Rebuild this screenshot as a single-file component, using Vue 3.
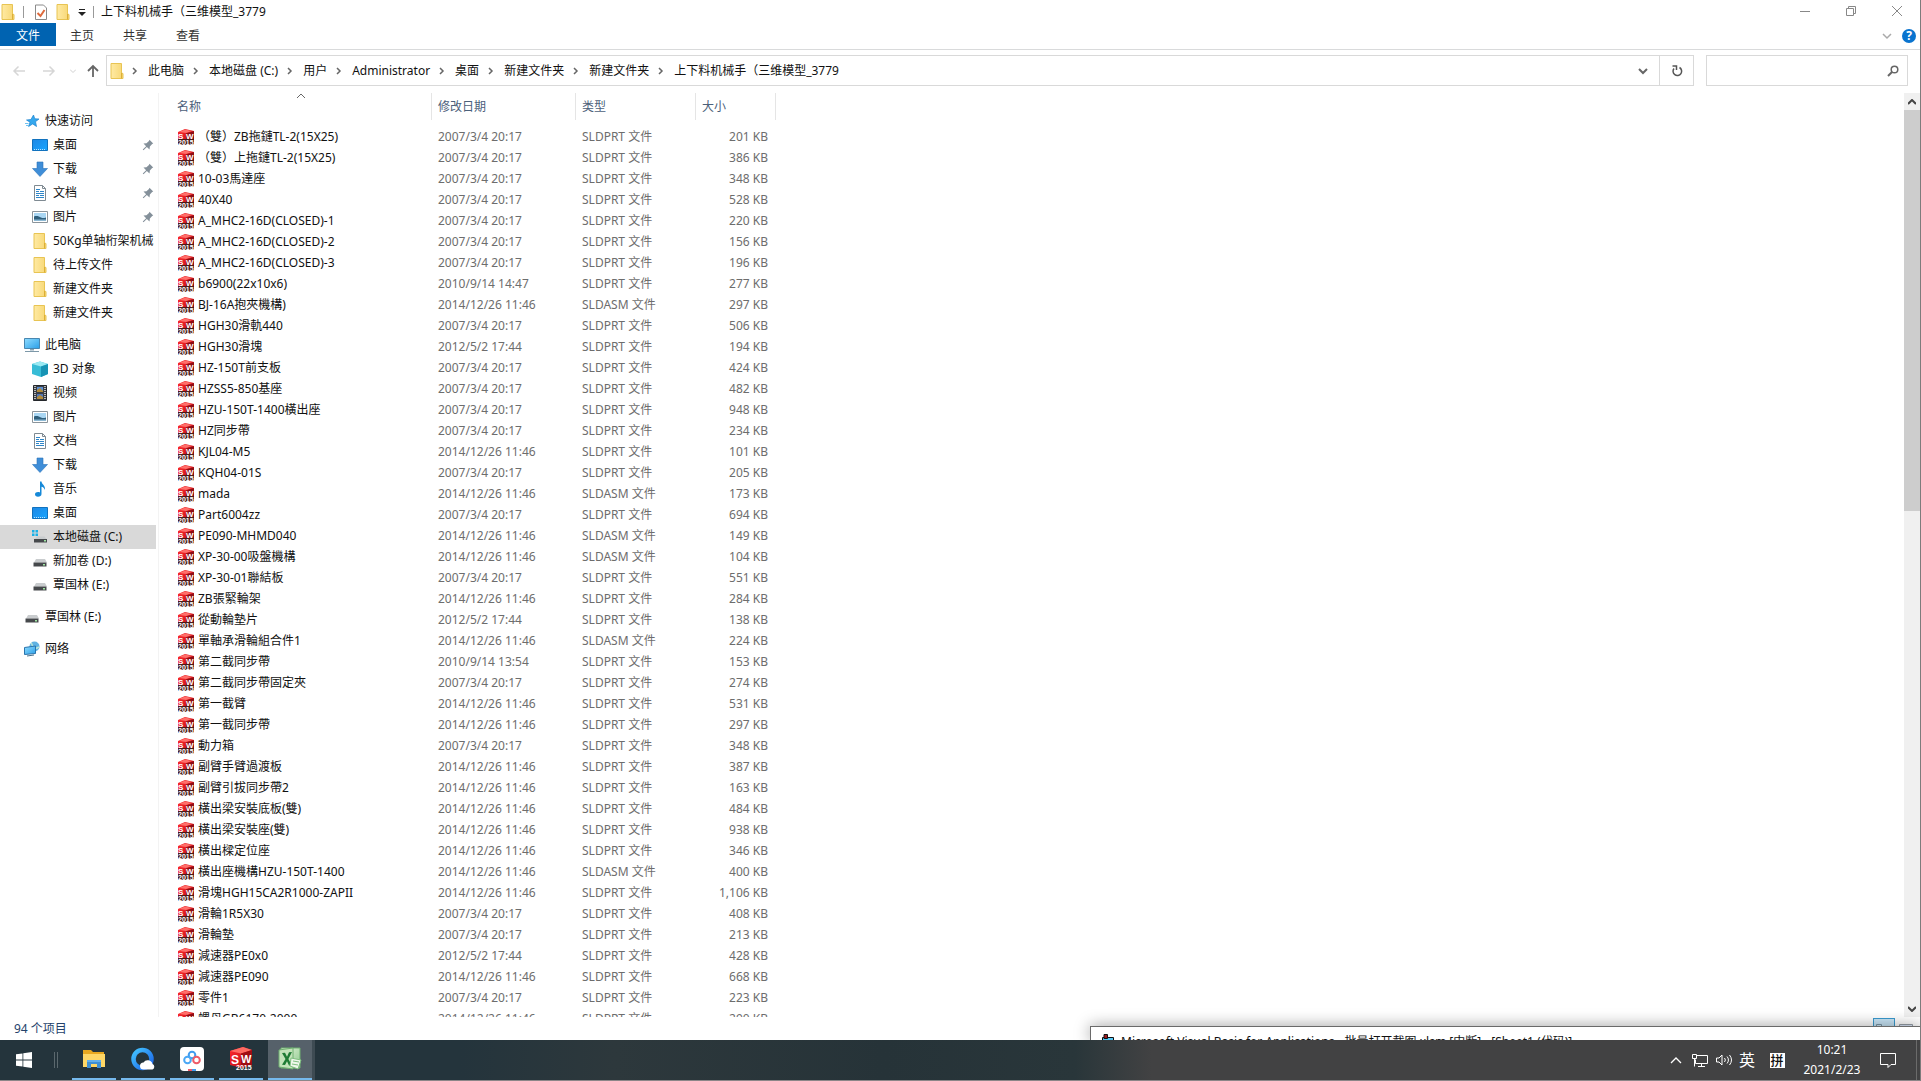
<script setup>
import { ref } from 'vue'

const tabs = ['主页', '共享', '查看']
const crumbs = ['此电脑', '本地磁盘 (C:)', '用户', 'Administrator', '桌面', '新建文件夹', '新建文件夹', '上下料机械手（三维模型_3779']

const groups = [
  {
    root: { icon: 'star', label: '快速访问' },
    items: [
      { icon: 'desktop', label: '桌面', pinned: true },
      { icon: 'download', label: '下载', pinned: true },
      { icon: 'document', label: '文档', pinned: true },
      { icon: 'picture', label: '图片', pinned: true },
      { icon: 'folder', label: '50Kg单轴桁架机械' },
      { icon: 'folder', label: '待上传文件' },
      { icon: 'folder', label: '新建文件夹' },
      { icon: 'folder', label: '新建文件夹' },
    ],
  },
  {
    root: { icon: 'computer', label: '此电脑' },
    items: [
      { icon: 'cube', label: '3D 对象' },
      { icon: 'video', label: '视频' },
      { icon: 'picture', label: '图片' },
      { icon: 'document', label: '文档' },
      { icon: 'download', label: '下载' },
      { icon: 'music', label: '音乐' },
      { icon: 'desktop', label: '桌面' },
      { icon: 'sysdrive', label: '本地磁盘 (C:)', selected: true },
      { icon: 'drive', label: '新加卷 (D:)' },
      { icon: 'drive', label: '覃国林 (E:)' },
    ],
  },
  { root: { icon: 'drive', label: '覃国林 (E:)' }, items: [] },
  { root: { icon: 'network', label: '网络' }, items: [] },
]

const D07 = '2007/3/4 20:17'
const D12 = '2012/5/2 17:44'
const D14 = '2014/12/26 11:46'
const PRT = 'SLDPRT 文件'
const ASM = 'SLDASM 文件'

const files = [
  ['（雙）ZB拖鏈TL-2(15X25)', D07, PRT, '201'],
  ['（雙）上拖鏈TL-2(15X25)', D07, PRT, '386'],
  ['10-03馬達座', D07, PRT, '348'],
  ['40X40', D07, PRT, '528'],
  ['A_MHC2-16D(CLOSED)-1', D07, PRT, '220'],
  ['A_MHC2-16D(CLOSED)-2', D07, PRT, '156'],
  ['A_MHC2-16D(CLOSED)-3', D07, PRT, '196'],
  ['b6900(22x10x6)', '2010/9/14 14:47', PRT, '277'],
  ['BJ-16A抱夾機構)', D14, ASM, '297'],
  ['HGH30滑軌440', D07, PRT, '506'],
  ['HGH30滑塊', D12, PRT, '194'],
  ['HZ-150T前支板', D07, PRT, '424'],
  ['HZSS5-850基座', D07, PRT, '482'],
  ['HZU-150T-1400橫出座', D07, PRT, '948'],
  ['HZ同步帶', D07, PRT, '234'],
  ['KJL04-M5', D14, PRT, '101'],
  ['KQH04-01S', D07, PRT, '205'],
  ['mada', D14, ASM, '173'],
  ['Part6004zz', D07, PRT, '694'],
  ['PE090-MHMD040', D14, ASM, '149'],
  ['XP-30-00吸盤機構', D14, ASM, '104'],
  ['XP-30-01聯結板', D07, PRT, '551'],
  ['ZB張緊輪架', D14, PRT, '284'],
  ['從動輪墊片', D12, PRT, '138'],
  ['單軸承滑輪組合件1', D14, ASM, '224'],
  ['第二截同步帶', '2010/9/14 13:54', PRT, '153'],
  ['第二截同步帶固定夾', D07, PRT, '274'],
  ['第一截臂', D14, PRT, '531'],
  ['第一截同步帶', D14, PRT, '297'],
  ['動力箱', D07, PRT, '348'],
  ['副臂手臂過渡板', D14, PRT, '387'],
  ['副臂引拔同步帶2', D14, PRT, '163'],
  ['橫出梁安裝底板(雙)', D14, PRT, '484'],
  ['橫出梁安裝座(雙)', D14, PRT, '938'],
  ['橫出樑定位座', D14, PRT, '346'],
  ['橫出座機構HZU-150T-1400', D14, ASM, '400'],
  ['滑塊HGH15CA2R1000-ZAPII', D14, PRT, '1,106'],
  ['滑輪1R5X30', D07, PRT, '408'],
  ['滑輪墊', D07, PRT, '213'],
  ['減速器PE0x0', D12, PRT, '428'],
  ['減速器PE090', D14, PRT, '668'],
  ['零件1', D07, PRT, '223'],
  ['螺母GB6170-2000', D14, PRT, '290'],
]

const apps = [
  { icon: 'app-explorer', label: '文件资源管理器' },
  { icon: 'app-browser', label: 'QQ浏览器' },
  { icon: 'app-netdisk', label: '百度网盘' },
  { icon: 'app-solidworks', label: 'SolidWorks' },
  { icon: 'app-excel', label: 'Excel', active: true },
]

const query = ref('')
</script>

<template>
  <div class="screen">
    <svg class="sprite" aria-hidden="true">
      <defs>
        <linearGradient id="g-folder" x1="0" x2="1"><stop offset="0" stop-color="#ffeaa3" /><stop offset="1" stop-color="#f7d774" /></linearGradient>
        <linearGradient id="g-blue" x1="0" y1="0" x2="1" y2="1"><stop offset="0" stop-color="#1e88e5" /><stop offset="1" stop-color="#19a5ff" /></linearGradient>
        <linearGradient id="g-screen" x1="0" y1="0" x2="1" y2="1"><stop offset="0" stop-color="#8fdcff" /><stop offset="1" stop-color="#2a9fe8" /></linearGradient>
        <linearGradient id="g-red" x1="0" y1="0" x2="1" y2="1"><stop offset="0" stop-color="#ff2a2e" /><stop offset="1" stop-color="#b30a12" /></linearGradient>
        <linearGradient id="g-ring" x1="0" y1="0" x2="1" y2="1"><stop offset="0" stop-color="#43c3ff" /><stop offset="1" stop-color="#1a62e8" /></linearGradient>
        <linearGradient id="g-excel" x1="0" y1="0" x2="1" y2="1"><stop offset="0" stop-color="#e5f4dc" /><stop offset="1" stop-color="#8cc98b" /></linearGradient>
        <symbol id="folder" viewBox="0 0 16 16">
          <path d="M2 .5h10.500v9.500l1.500.5v5H2z" fill="url(#g-folder)" stroke="#e8c453" />
          <path d="M12.500 10v5.500" stroke="#dcae37" />
        </symbol>
        <symbol id="star" viewBox="0 0 16 16">
          <path d="M9.500 2l1.300 3.800 4.200.2-3.500 2.700 1 4.800-3.800-2.600L4.600 13.500l1.400-4.300L2.500 7l4.400-.5z" fill="#35a8ee" stroke="#1c83cf" stroke-width=".7" />
          <path d="M1 10.500h3.500M2 12.500h3" stroke="#6fc2f2" />
        </symbol>
        <symbol id="desktop" viewBox="0 0 16 16">
          <path d="M.5 2.500h15v11H.5z" fill="url(#g-blue)" stroke="#1272be" />
          <path d="M2 12.500h12" stroke="#bfe5ff" stroke-dasharray="1 1" />
        </symbol>
        <symbol id="download" viewBox="0 0 16 16">
          <path d="M5 1h6v6.500h4.500L8 15.500.5 7.500H5z" fill="#3f8ed8" stroke="#2a73bb" stroke-width=".6" />
        </symbol>
        <symbol id="document" viewBox="0 0 16 16">
          <path d="M2.500.5h8l3 3v12h-11z" fill="#fff" stroke="#7f8a92" />
          <path d="M10.500.5v3h3" fill="none" stroke="#7f8a92" />
          <path d="M4 4.500h4M4 6.500h3m1 0h4M4 8.500h8M4 10.500h3m1 0h4M4 12.500h8" stroke="#2f86c8" />
        </symbol>
        <symbol id="picture" viewBox="0 0 16 16">
          <path d="M.5 2.500h15v11H.5z" fill="#fff" stroke="#8b949b" />
          <path d="M2 4h12v8H2z" fill="#a9d6f3" />
          <path d="M2 7.500c3-1 5 0 7 1s3 .5 5 0V12H2z" fill="#2f5f7c" />
          <path d="M2 10.500h12V12H2z" fill="#8db9d4" />
        </symbol>
        <symbol id="computer" viewBox="0 0 16 16">
          <path d="M.5 1.500h15v10H.5z" fill="url(#g-screen)" stroke="#4987b0" />
          <path d="M6 12h4v1.500H6z" fill="#8aa5b5" /><path d="M1 14.500h14" stroke="#7d98a8" />
        </symbol>
        <symbol id="cube" viewBox="0 0 16 16">
          <path d="M0 3l8-2.500L16 3v10l-7 3-9-3z" fill="#37bcd6" />
          <path d="M0 3l8-2.500L16 3 9 5.500z" fill="#9ae9f2" /><path d="M9 5.500L16 3v10l-7 3z" fill="#1793b4" />
        </symbol>
        <symbol id="video" viewBox="0 0 16 16">
          <path d="M1.500.5h13v15h-13z" fill="#3b3f46" stroke="#24272b" />
          <path d="M3 1v14M13 1v14" stroke="#e4e4e4" stroke-width="1.500" stroke-dasharray="1 1" />
          <path d="M5 2h6v5H5z" fill="#5c8fd2" /><path d="M5 9h6v5H5z" fill="#5277b8" />
          <path d="M5 5l3-2 3 3v1H5zM5 12l3-2 3 2v2H5z" fill="#b18a3a" />
        </symbol>
        <symbol id="music" viewBox="0 0 16 16">
          <path d="M8 .5h1.500c.3 3 4 3.500 3.500 8.500-.7-2-2-3-3.500-3.300V13c0 1.700-1.500 2.700-3.500 2.700S3 14.700 3 13.300 4.500 11 6 11c.8 0 1.500.1 2 .4z" fill="#1689d8" />
        </symbol>
        <symbol id="drive" viewBox="0 0 16 16">
          <path d="M4 6h9l2 3.500H2z" fill="#c9ccce" /><path d="M1.500 9.500h13v4h-13z" fill="#46494c" />
          <path d="M11 11h2v1.500h-2z" fill="#9fe6a2" />
        </symbol>
        <symbol id="sysdrive" viewBox="0 0 16 16">
          <path d="M0 1h2.500v2.500H0zM3.500 1H6v2.500H3.500zM0 4.500h2.500V7H0zM3.500 4.500H6V7H3.500z" fill="#19b0e8" />
          <path d="M5 7.500h7.500L14.500 10H3z" fill="#c9ccce" /><path d="M2 10h13v3.500H2z" fill="#46494c" />
          <path d="M12 11h2v1.500h-2z" fill="#9fe6a2" />
        </symbol>
        <symbol id="network" viewBox="0 0 16 16">
          <circle cx="10.500" cy="5.500" r="5" fill="#5fb2e2" /><path d="M7 2c2 2 1 4 3 5s3 0 5-1" fill="none" stroke="#b8e4d6" stroke-width="1.500" />
          <path d="M.5 6.500l11-1.500v7.500l-11 1z" fill="url(#g-screen)" stroke="#2a74ac" /><path d="M3 15l7-1" stroke="#48718c" />
        </symbol>
        <symbol id="pin" viewBox="0 0 16 16">
          <path d="M10 1l5 5-1.500.7L10.500 10l-.5 4-3.500-3.500L2 15l-1-1 4.500-4.500L2 6l4-.5L9.300 2.500z" fill="#84909a" />
        </symbol>
        <symbol id="sw" viewBox="0 0 16 16">
          <path d="M0 3l7-3 9 2v12l-6 2H0z" fill="url(#g-red)" />
          <path d="M1 3l6-2.500L14 2 8 4z" fill="#ff6f6a" /><path d="M8 4.500l8-2.300v9L8 13z" fill="#8d0d13" />
          <path d="M0 10h16v5l-2 1H0z" fill="#4a1a1a" />
          <text x="0" y="10" font-family="Liberation Sans, sans-serif" font-weight="700" font-size="8" fill="#fff">S</text>
          <text x="8" y="10" font-family="Liberation Sans, sans-serif" font-weight="700" font-size="8" fill="#fff">W</text>
          <text x="0" y="16" font-family="Liberation Sans, sans-serif" font-weight="700" font-size="7" fill="#fff">2015</text>
        </symbol>
        <symbol id="app-explorer" viewBox="0 0 24 24">
          <path d="M1 3h8l2 2h11v15H1z" fill="#e9a820" /><path d="M1 7h22v13H1z" fill="#ffd766" />
          <path d="M5 21v-8h14v8h-4v-4H9v4z" fill="#3f8fd3" /><path d="M5 13h14v2H5z" fill="#62b0ec" />
        </symbol>
        <symbol id="app-browser" viewBox="0 0 24 24">
          <circle cx="11.500" cy="12" r="9" fill="none" stroke="url(#g-ring)" stroke-width="4.500" />
          <path d="M12.500 22.500a3.500 3.500 0 0 1 0-7 5 5 0 0 1 9 1.500 3 3 0 0 1 0 5.500z" fill="#fff" />
        </symbol>
        <symbol id="app-netdisk" viewBox="0 0 24 24">
          <rect width="24" height="24" rx="4" fill="#fff" />
          <circle cx="12" cy="8" r="3.300" fill="none" stroke="#3f9cf0" stroke-width="2" />
          <circle cx="7.500" cy="13" r="3.300" fill="none" stroke="#4aa7f5" stroke-width="2" />
          <circle cx="16.500" cy="13" r="3.300" fill="none" stroke="#ee5a68" stroke-width="2" />
          <path d="M8 23h4" stroke="#ee5a68" stroke-width="2" /><path d="M12 23h4" stroke="#3f9cf0" stroke-width="2" />
        </symbol>
        <symbol id="app-solidworks" viewBox="0 0 24 24">
          <path d="M1 4l13-4 9 3v15l-10 3L1 18z" fill="url(#g-red)" /><path d="M1 4l13-4 9 3-11 3.500z" fill="#ff6a62" />
          <path d="M12 6.500L23 3v15l-11 3z" fill="#9e0c13" />
          <text x="2" y="17" font-family="Liberation Sans, sans-serif" font-weight="700" font-size="12" fill="#fff">S</text>
          <text x="12" y="16" font-family="Liberation Sans, sans-serif" font-weight="700" font-size="11" fill="#fff">W</text>
          <text x="7" y="23" font-family="Liberation Sans, sans-serif" font-weight="700" font-size="7" fill="#fff">2015</text>
        </symbol>
        <symbol id="app-excel" viewBox="0 0 24 24">
          <path d="M3 1h19v20H3z" fill="url(#g-excel)" stroke="#6fb070" /><path d="M1 3l14-2v21L1 20z" fill="#c3e3ba" stroke="#6fb070" />
          <path d="M4 6l3-.3 2 4 2-4.500 3-.3-3.600 7 3.600 6.800-3-.3-2-4.200-2 3.800-3-.3 3.500-5.700z" fill="#1f7b35" />
          <path d="M13 11l10 2-3 9-8-3z" fill="#eef7ea" stroke="#7fbf80" /><path d="M15 14l6 1M14 17l6 1" stroke="#7fbf80" />
        </symbol>
      </defs>
    </svg>

    <main class="window">
      <header class="titlebar">
        <svg class="ic"><use href="#folder" /></svg>
        <i class="sep"></i>
        <button class="bare" aria-label="属性">
          <svg class="ic" viewBox="0 0 16 16"><path d="M2.500 1h8l3 3v11.500h-11z" fill="#fff" stroke="#8a8a8a" /><path d="M4.500 9l3 3 4-6" fill="none" stroke="#de6a3c" stroke-width="2" /></svg>
        </button>
        <button class="bare" aria-label="新建文件夹"><svg class="ic"><use href="#folder" /></svg></button>
        <button class="bare arrow" aria-label="自定义快速访问工具栏">
          <svg width="8" height="8" viewBox="0 0 8 8"><path d="M1 1.500h6" stroke="#222" /><path d="M0 4h8L4 8z" fill="#222" /></svg>
        </button>
        <i class="sep"></i>
        <h1>上下料机械手（三维模型_3779</h1>
        <div class="wbtns">
          <button class="bare" aria-label="最小化"><svg width="12" height="12" viewBox="0 0 12 12"><path d="M1 6.500h10" stroke="#888" /></svg></button>
          <button class="bare" aria-label="还原"><svg width="12" height="12" viewBox="0 0 12 12"><path d="M1.500 3.500h7v7h-7zM3.500 3.500v-2h7v7h-2" fill="none" stroke="#888" /></svg></button>
          <button class="bare" aria-label="关闭"><svg width="12" height="12" viewBox="0 0 12 12"><path d="M1 1l10 10M11 1L1 11" stroke="#888" /></svg></button>
        </div>
      </header>

      <nav class="ribbon">
        <button class="tab file">文件</button>
        <button v-for="t in tabs" :key="t" class="tab">{{ t }}</button>
        <div class="help">
          <button class="bare" aria-label="展开功能区"><svg width="10" height="8" viewBox="0 0 10 8"><path d="M1 2l4 4 4-4" fill="none" stroke="#aaa" stroke-width="1.500" /></svg></button>
          <button class="bare q" aria-label="帮助">?</button>
        </div>
      </nav>

      <div class="address">
        <div class="history">
          <button class="bare" aria-label="后退"><svg width="14" height="12" viewBox="0 0 14 12"><path d="M13 6H2M6.500 1.500L2 6l4.500 4.500" fill="none" stroke="#d6d6d6" stroke-width="1.500" /></svg></button>
          <button class="bare" aria-label="前进"><svg width="14" height="12" viewBox="0 0 14 12"><path d="M1 6h11M7.500 1.500L12 6l-4.500 4.500" fill="none" stroke="#d6d6d6" stroke-width="1.500" /></svg></button>
          <button class="bare small" aria-label="最近位置"><svg width="6" height="6" viewBox="0 0 6 6"><path d="M0 1.500l3 3 3-3" fill="none" stroke="#d0d0d0" /></svg></button>
          <button class="bare" aria-label="向上"><svg width="12" height="14" viewBox="0 0 12 14"><path d="M6 13V2M1 7l5-5 5 5" fill="none" stroke="#666" stroke-width="1.800" /></svg></button>
        </div>
        <div class="path">
          <svg class="ic"><use href="#folder" /></svg>
          <template v-for="(c, i) in crumbs" :key="i">
            <svg class="chev" viewBox="0 0 25 10"><path d="M10 2l3 3-3 3" fill="none" stroke="#666" stroke-width="1.500" /></svg>
            <a href="#">{{ c }}</a>
          </template>
          <button class="bare drop" aria-label="以前的位置"><svg width="10" height="8" viewBox="0 0 10 8"><path d="M1 2l4 4 4-4" fill="none" stroke="#666" stroke-width="2" /></svg></button>
          <button class="bare refresh" aria-label="刷新"><svg width="12" height="12" viewBox="0 0 12 12"><path d="M8.500 2.500A4.300 4.300 0 1 1 3 3.500M1.500 1h4v4" fill="none" stroke="#555" stroke-width="1.500" /></svg></button>
        </div>
        <label class="search">
          <input v-model="query" type="text" aria-label="搜索" />
          <svg width="12" height="12" viewBox="0 0 12 12"><circle cx="7.500" cy="4.500" r="3.300" fill="none" stroke="#666" stroke-width="1.500" /><path d="M5 7L1 11" stroke="#666" stroke-width="2" /></svg>
        </label>
      </div>

      <div class="body">
        <aside class="tree">
          <ul v-for="(g, gi) in groups" :key="gi">
            <li class="root"><svg class="ic"><use :href="'#' + g.root.icon" /></svg><a href="#">{{ g.root.label }}</a></li>
            <li v-for="(n, ni) in g.items" :key="ni" :class="{ selected: n.selected }">
              <svg class="ic"><use :href="'#' + n.icon" /></svg><a href="#">{{ n.label }}</a>
              <svg v-if="n.pinned" class="pin"><use href="#pin" /></svg>
            </li>
          </ul>
        </aside>

        <section class="list">
          <table>
            <colgroup><col class="c-name" /><col class="c-date" /><col class="c-type" /><col class="c-size" /></colgroup>
            <thead>
              <tr>
                <th>名称<svg class="sort" width="10" height="6" viewBox="0 0 10 6"><path d="M1 5l4-4 4 4" fill="none" stroke="#666" /></svg></th>
                <th>修改日期</th><th>类型</th><th>大小</th>
              </tr>
            </thead>
            <tbody>
              <tr v-for="f in files" :key="f[0]">
                <td><div class="name"><svg class="ic"><use href="#sw" /></svg>{{ f[0] }}</div></td>
                <td>{{ f[1] }}</td><td>{{ f[2] }}</td><td class="num">{{ f[3] }} KB</td>
              </tr>
            </tbody>
          </table>
        </section>

        <div class="scroll">
          <button class="bare" aria-label="向上滚动"><svg width="8" height="6" viewBox="0 0 8 6"><path d="M0 5l4-4 4 4" fill="none" stroke="#444" stroke-width="2" /></svg></button>
          <div class="track"><div class="thumb"></div></div>
          <button class="bare" aria-label="向下滚动"><svg width="8" height="6" viewBox="0 0 8 6"><path d="M0 1l4 4 4-4" fill="none" stroke="#444" stroke-width="2" /></svg></button>
        </div>
      </div>

      <footer class="status">
        <span>94 个项目</span>
        <div class="views">
          <button class="bare on" aria-label="详细信息"><svg width="18" height="14" viewBox="0 0 18 14"><path d="M1.500 2.500h5v9h-5z" fill="#cfe9f8" stroke="#7b98a8" /><path d="M8 4.500h3m1 0h4M8 7.500h3m1 0h4" stroke="#5b7485" /></svg></button>
          <button class="bare" aria-label="大图标"><svg width="14" height="14" viewBox="0 0 14 14"><path d="M.5 2.500h13v10H.5z" fill="#dbe7fa" stroke="#98a0a8" /><path d="M2 4h10v7H2z" fill="#4678d8" /></svg></button>
        </div>
      </footer>

      <div class="vbe">
        <svg width="14" height="14" viewBox="0 0 14 14"><path d="M1.500 3.500h11v9h-11z" fill="#55c8f5" stroke="#111" /><path d="M3 .5h3.500v4H3z" fill="#a01c20" stroke="#111" /></svg>
        <span>Microsoft Visual Basic for Applications - 批量打开截图.xlsm [中断] - [Sheet1 (代码)]</span>
      </div>
    </main>

    <footer class="taskbar">
      <button class="start" aria-label="开始"><svg width="16" height="16" viewBox="0 0 16 16"><path d="M0 2.300L6.500 1.400v6.200H0zM7.300 1.300L16 0v7.600H7.300zM0 8.400h6.500v6.200L0 13.700zM7.300 8.400H16V16l-8.700-1.300z" fill="#fff" /></svg></button>
      <i class="grip"></i>
      <button v-for="a in apps" :key="a.icon" class="app" :class="{ active: a.active }" :aria-label="a.label">
        <svg><use :href="'#' + a.icon" /></svg>
      </button>
      <div class="tray">
        <button aria-label="显示隐藏的图标"><svg width="12" height="8" viewBox="0 0 12 8"><path d="M1 7l5-5 5 5" fill="none" stroke="#fff" stroke-width="1.300" /></svg></button>
        <button aria-label="网络"><svg width="16" height="16" viewBox="0 0 16 16"><path d="M4.500 3.500h11v8H3.500v-4M9.500 11.500v3M6 14.500h7" fill="none" stroke="#fff" /><path d="M.5 2.500h4v4h-4zM2.500 6.500v8" fill="none" stroke="#fff" /></svg></button>
        <button aria-label="音量"><svg width="17" height="16" viewBox="0 0 17 16"><path d="M.5 6h2.500l3-3v10L3 10H.5z" fill="none" stroke="#fff" /><path d="M8.500 6a3 3 0 0 1 0 4M11 4.500a5 5 0 0 1 0 7M13.500 3a8 8 0 0 1 0 10" fill="none" stroke="#fff" /></svg></button>
        <button class="lang">英</button>
        <button class="ime"><b>拼</b></button>
        <button class="clock"><time>10:21</time><time>2021/2/23</time></button>
        <button class="note" aria-label="通知"><svg width="18" height="18" viewBox="0 0 18 18"><path d="M1.500 2.500h15v11H12l-3 3v-3H1.500z" fill="none" stroke="#fff" /></svg></button>
        <i class="peek"></i>
      </div>
    </footer>
  </div>
</template>

<style>
body { background: #fff; }
</style>

<style scoped>
* { box-sizing: border-box; }
.screen {
  height: 100vh;
  display: flex;
  flex-direction: column;
  border-right: 1px solid #7c7c7c;
  border-bottom: 1px solid #8c8688;
  overflow: hidden;
  font: 12px/20px "Noto Sans", "Noto Sans CJK SC", sans-serif;
  color: #111;
}
.sprite { position: absolute; width: 0; height: 0; }
svg { display: block; flex: none; }
.ic { width: 16px; height: 16px; }
a { color: inherit; text-decoration: none; white-space: nowrap; }
button { font: inherit; color: inherit; border: 0; padding: 0; background: none; display: flex; align-items: center; justify-content: center; }
ul { list-style: none; margin: 0; padding: 0; }

.window { position: relative; flex: 1; min-height: 0; display: flex; flex-direction: column; overflow: hidden; }

.titlebar { display: flex; align-items: center; height: 23px; flex: none; }
.titlebar .sep { width: 1px; height: 12px; background: #999; margin: 0 7px; }
.titlebar .sep + .bare { margin: 0 6px 0 2px; }
.titlebar .arrow { width: 22px; }
.titlebar .arrow + .sep { margin-left: 0; }
h1 { font: inherit; margin: 0; }
.wbtns { margin-left: auto; display: flex; }
.wbtns button { width: 46px; height: 21px; margin-bottom: 2px; }

.ribbon { display: flex; gap: 1px; height: 27px; flex: none; padding-bottom: 3px; border-bottom: 1px solid #d9dadb; }
.tab { padding: 2px 14px 0; color: #333; }
.file { background: #0063b1; color: #fff; padding: 2px 16px 0; margin-right: -1px; }
.help { margin-left: auto; display: flex; align-items: center; gap: 10px; padding: 2px 4px 0 0; }
.q { width: 14px; height: 14px; border-radius: 50%; background: #0a74cf; color: #fff; font-weight: 700; line-height: 14px; }

.address { display: flex; height: 43px; flex: none; padding: 5px 12px 7px 0; }
.history { width: 106px; display: flex; align-items: center; padding-left: 12px; gap: 16px; }
.history .small { margin: 0 -3px 0 -2px; }
.history .small + button { margin-left: -2px; }
.path { flex: 1; min-width: 0; display: flex; align-items: center; border: 1px solid #d9d9d9; padding-left: 2px; }
.chev { width: 25px; height: 10px; }
.path .ic + .chev { margin-left: -2px; }
.drop { width: 32px; height: 100%; margin-left: auto; }
.refresh { width: 34px; height: 100%; border-left: 1px solid #d9d9d9; }
.search { width: 202px; margin-left: 12px; display: flex; align-items: center; border: 1px solid #d9d9d9; padding-right: 8px; }
.search input { flex: 1; min-width: 0; height: 100%; border: 0; outline: 0; padding: 0 8px; font: inherit; background: none; }

.body { flex: 1; min-height: 0; display: flex; }
.tree { width: 159px; flex: none; padding: 16px 2px 0 0; border-right: 1px solid #f3f3f3; overflow: hidden; }
.tree ul { margin-bottom: 8px; }
.tree li { position: relative; display: flex; align-items: center; gap: 5px; height: 24px; padding-left: 32px; overflow: hidden; }
.tree .root { padding-left: 24px; }
.tree .selected { background: #d9d9d9; }
.pin { width: 12px; height: 12px; margin: 0 2px 0 auto; }

.list { flex: 1; min-width: 0; overflow: hidden; padding-left: 10px; }
table { width: 607px; table-layout: fixed; border-collapse: separate; border-spacing: 0; }
.c-name { width: 263px; }
.c-date { width: 144px; }
.c-type { width: 120px; }
.c-size { width: 80px; }
th { position: relative; height: 27px; padding: 0 6px; text-align: left; font-weight: 400; color: #4c607a; border-right: 1px solid #e5e5e5; }
th:first-child { padding-left: 8px; }
.sort { position: absolute; top: 0; left: calc(50% - 4px); }
tbody::before { content: ""; display: block; height: 6px; }
td { height: 21px; padding: 0 6px; color: #6d6d6d; white-space: nowrap; }
td:first-child { padding-left: 9px; }
td.num { text-align: right; padding-right: 8px; }
.name { display: flex; align-items: center; gap: 4px; color: #111; }

.scroll { width: 16px; flex: none; display: flex; flex-direction: column; background: #f0f0f0; }
.scroll button { height: 17px; }
.track { flex: 1; }
.thumb { height: 45%; background: #cdcdcd; }

.status { display: flex; align-items: center; justify-content: space-between; height: 23px; flex: none; padding: 0 6px 0 14px; color: #24426b; }
.views { display: flex; gap: 3px; }
.views button { width: 16px; height: 22px; }
.views .on { width: 22px; background: #c9e6f7; border: 1px solid #3a9bd0; }

.vbe { position: absolute; right: 0; bottom: 0; left: 1090px; height: 14px; padding: 7px 10px 0; display: flex; gap: 6px; overflow: hidden; background: #fff; border: 1px solid #6a6a6a; border-width: 1px 0 0 1px; box-shadow: 0 0 16px #0006; white-space: nowrap; line-height: 16px; }

.taskbar { display: flex; height: 40px; flex: none; color: #fff; background: linear-gradient(90deg, #24343c 0, #24343c 24%, #2d383c 32%, #263338 46%, #29363a 56%, #424243 60%); }
.start { width: 48px; }
.grip { width: 4px; height: 16px; margin: 12px 14px 0 6px; border: 1px solid #5b686e; border-width: 0 1px; }
.app { width: 44px; margin-right: 5px; border-bottom: 2px solid #76b9ed; }
.app svg { width: 24px; height: 24px; }
.app.active { background-color: #56616a; box-shadow: 3px 0 0 #3e4b53; }
.tray { margin-left: auto; display: flex; }
.tray button { width: 24px; }
.tray .lang { width: 22px; font-size: 16px; }
.tray .ime { width: 38px; }
.ime b { width: 15px; height: 15px; background: #fff; color: #111; font-size: 13px; line-height: 15px; font-weight: 500; }
.tray .clock { width: 72px; flex-direction: column; line-height: 20px; }
.tray .note { width: 40px; }
.peek { width: 4px; margin-left: 8px; border-left: 1px solid #6b6b6b; }
</style>
